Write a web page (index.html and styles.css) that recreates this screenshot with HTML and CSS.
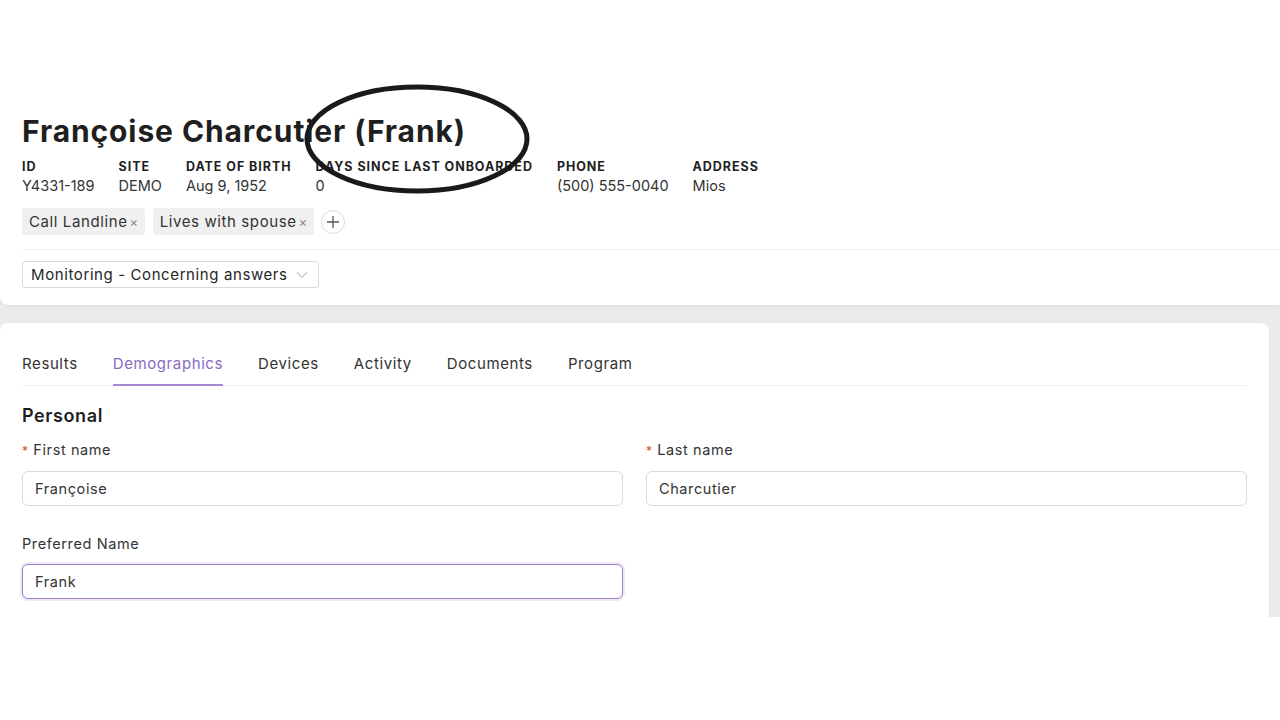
FILE: index.html
```html
<!DOCTYPE html>
<html lang="en">
<head>
    <meta charset="UTF-8">
    <meta name="viewport" content="width=device-width, initial-scale=1.0">
    <title>Françoise Charcutier (Frank)</title>
    <link rel="stylesheet" href="styles.css">
</head>
<body>
    <div class="frame">
        <div class="header">
            <h1>Françoise Charcutier (Frank)</h1>
            <div class="meta">
                <div class="meta-item"><span class="meta-label">ID</span><span class="meta-value">Y4331-189</span></div>
                <div class="meta-item"><span class="meta-label">Site</span><span class="meta-value">DEMO</span></div>
                <div class="meta-item"><span class="meta-label">Date of birth</span><span class="meta-value">Aug 9, 1952</span></div>
                <div class="meta-item"><span class="meta-label">Days since last onboarded</span><span class="meta-value">0</span></div>
                <div class="meta-item"><span class="meta-label">Phone</span><span class="meta-value">(500) 555-0040</span></div>
                <div class="meta-item"><span class="meta-label">Address</span><span class="meta-value">Mios</span></div>
            </div>
            <div class="tags">
                <span class="tag">Call Landline<span class="tag-x">×</span></span>
                <span class="tag">Lives with spouse<span class="tag-x">×</span></span>
                <span class="tag-add">
                    <svg width="14" height="14" viewBox="0 0 14 14"><path d="M7 1v12M1 7h12" stroke="#555" stroke-width="1.3" fill="none"/></svg>
                </span>
            </div>
            <div class="divider"></div>
            <div class="status-select">
                Monitoring - Concerning answers
                <svg width="12" height="8" viewBox="0 0 12 8"><path d="M1 1.5l5 5 5-5" stroke="#c4c4c4" stroke-width="1.1" fill="none"/></svg>
            </div>
        </div>

        <div class="card">
            <div class="tabs">
                <span class="tab">Results</span>
                <span class="tab active">Demographics</span>
                <span class="tab">Devices</span>
                <span class="tab">Activity</span>
                <span class="tab">Documents</span>
                <span class="tab">Program</span>
            </div>
            <h2>Personal</h2>
            <div class="form-grid">
                <div class="field">
                    <label><span class="req">*</span> First name</label>
                    <div class="input">Françoise</div>
                </div>
                <div class="field">
                    <label><span class="req">*</span> Last name</label>
                    <div class="input">Charcutier</div>
                </div>
                <div class="field">
                    <label>Preferred Name</label>
                    <div class="input focused">Frank</div>
                </div>
            </div>
        </div>

        <svg class="annotation" width="236" height="118" viewBox="0 0 236 118">
            <ellipse cx="118" cy="59" rx="110" ry="52" stroke="#1a1a1a" stroke-width="5" fill="none"/>
        </svg>
    </div>
</body>
</html>
```

FILE: styles.css
```css
body {
    margin: 0;
    background: #fff;
    font-family: Inter, "Open Sans", sans-serif;
    color: #262626;
    letter-spacing: 0.6px;
}
.frame {
    position: relative;
    height: 617px;
    background: #ebebeb;
    overflow: hidden;
}
.header {
    background: #fff;
    height: 305px;
    box-sizing: border-box;
    padding: 112px 0 0 22px;
    border-radius: 0 0 0 8px;
    box-shadow: 0 1px 3px rgba(0,0,0,0.06);
}
h1 {
    margin: 0;
    font-size: 30px;
    font-weight: 700;
    line-height: 38px;
    color: #1f1f1f;
    letter-spacing: 0.9px;
}
.meta {
    display: flex;
    gap: 24px;
    margin-top: 8px;
}
.meta-item {
    display: flex;
    flex-direction: column;
}
.meta-label {
    font-size: 12.5px;
    font-weight: 700;
    text-transform: uppercase;
    line-height: 18px;
    letter-spacing: 0.95px;
    color: #1f1f1f;
}
.meta-value {
    font-size: 14.5px;
    line-height: 20px;
    letter-spacing: 0;
    color: #333;
}
.tags {
    display: flex;
    align-items: center;
    gap: 8px;
    margin-top: 12px;
}
.tag {
    background: #f0f0f0;
    border-radius: 3px;
    padding: 0 6px 0 7px;
    height: 27px;
    line-height: 27px;
    font-size: 15px;
    color: #333;
}
.tag-x {
    color: #888;
    font-size: 13px;
    margin-left: 2px;
}
.tag-add {
    width: 24px;
    height: 24px;
    border: 1px solid #d9d9d9;
    border-radius: 50%;
    display: flex;
    align-items: center;
    justify-content: center;
    margin-left: -1px;
    box-sizing: border-box;
}
.divider {
    height: 1px;
    background: #f0f0f0;
    margin-top: 14px;
}
.status-select {
    display: inline-flex;
    align-items: center;
    gap: 8px;
    margin-top: 11px;
    height: 25px;
    padding: 0 10px 0 8px;
    border: 1px solid #d9d9d9;
    border-radius: 3px;
    font-size: 15px;
    color: #262626;
}
.card {
    background: #fff;
    margin: 18px 11px 0 0;
    height: 300px;
    border-radius: 8px 8px 0 0;
    padding: 30px 22px 0 22px;
    box-sizing: border-box;
}
.tabs {
    display: flex;
    gap: 35px;
    border-bottom: 1px solid #f0f0f0;
}
.tab {
    font-size: 15px;
    line-height: 21px;
    padding-bottom: 10px;
    color: #333;
    border-bottom: 2px solid transparent;
    margin-bottom: -1px;
}
.tab.active {
    color: #8a6bbf;
    border-bottom-color: #a58ad2;
}
h2 {
    margin: 18px 0 0;
    font-size: 18px;
    font-weight: 600;
    line-height: 24px;
    color: #1f1f1f;
}
.form-grid {
    display: grid;
    grid-template-columns: 1fr 1fr;
    column-gap: 23px;
    row-gap: 28px;
    margin-top: 12px;
}
label {
    display: block;
    font-size: 14.5px;
    line-height: 20px;
    color: #333;
    margin-bottom: 10px;
}
.req {
    color: #e2452b;
    font-size: 12px;
}
.input {
    height: 35px;
    box-sizing: border-box;
    border: 1px solid #d9d9d9;
    border-radius: 6px;
    padding: 0 12px;
    line-height: 33px;
    font-size: 14.5px;
    color: #333;
}
.input.focused {
    border-color: #9a7fcb;
    box-shadow: 0 0 0 2px rgba(138,107,191,0.15);
}
.annotation {
    position: absolute;
    left: 299px;
    top: 80px;
}
```
